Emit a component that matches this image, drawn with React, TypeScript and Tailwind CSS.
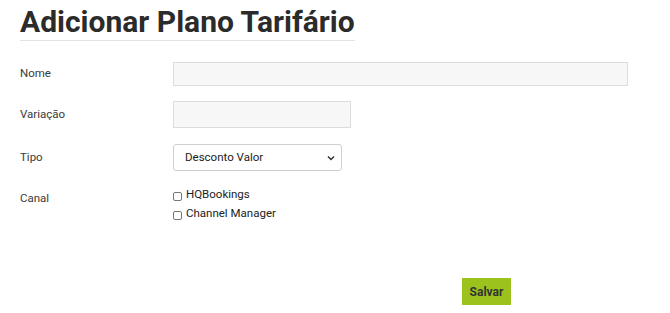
export default function App() {
    return (
        <div className="w-[670px] h-[313px] bg-white text-[#3a3a3a] font-['Roboto',sans-serif] relative overflow-hidden">
            <div className="pl-[20px] pt-[5px]">
                <h1 className="inline-block text-[30px] leading-[34px] font-bold text-[#2b2b2b] border-b border-[#e3e3e3] pb-[1px]">
                    Adicionar Plano Tarifário
                </h1>
            </div>

            <div className="flex flex-col pl-[20px] mt-[21px]">
                <div className="flex items-center h-[24px]">
                    <label className="w-[153px] text-[11.5px]">Nome</label>
                    <input className="w-[455px] h-[24px] bg-[#f7f7f7] border border-[#dcdcdc] outline-none" />
                </div>

                <div className="flex items-center h-[27px] mt-[15px]">
                    <label className="w-[153px] text-[11.5px]">Variação</label>
                    <input className="w-[178px] h-[27px] bg-[#f7f7f7] border border-[#dcdcdc] outline-none" />
                </div>

                <div className="flex items-center h-[27px] mt-[16px]">
                    <label className="w-[153px] text-[11.5px]">Tipo</label>
                    <div className="relative w-[169px] h-[27px] border border-[#cfcfcf] rounded-[3px] flex items-center pl-[11px] text-[11.5px] text-[#222]">
                        Desconto Valor
                        <svg className="absolute right-[6px] top-[10px]" width="8" height="6" viewBox="0 0 8 6">
                            <path d="M1 1.5 L4 4.5 L7 1.5" fill="none" stroke="#333" strokeWidth="1.5" />
                        </svg>
                    </div>
                </div>

                <div className="flex mt-[16px]">
                    <label className="w-[153px] text-[11.5px] pt-[3px]">Canal</label>
                    <div className="flex flex-col gap-[4px] text-[11.5px] text-[#222]">
                        <div className="flex items-center gap-[4px] h-[15px]">
                            <span className="w-[9px] h-[9px] border border-[#777] rounded-[2px] mt-[4px]" />
                            HQBookings
                        </div>
                        <div className="flex items-center gap-[4px] h-[15px]">
                            <span className="w-[9px] h-[9px] border border-[#777] rounded-[2px] mt-[4px]" />
                            Channel Manager
                        </div>
                    </div>
                </div>
            </div>

            <div className="pl-[462px] mt-[57px]">
                <button className="w-[49px] h-[27px] bg-[#9cc31d] text-[12px] font-bold text-[#333]">
                    Salvar
                </button>
            </div>
        </div>
    )
}
